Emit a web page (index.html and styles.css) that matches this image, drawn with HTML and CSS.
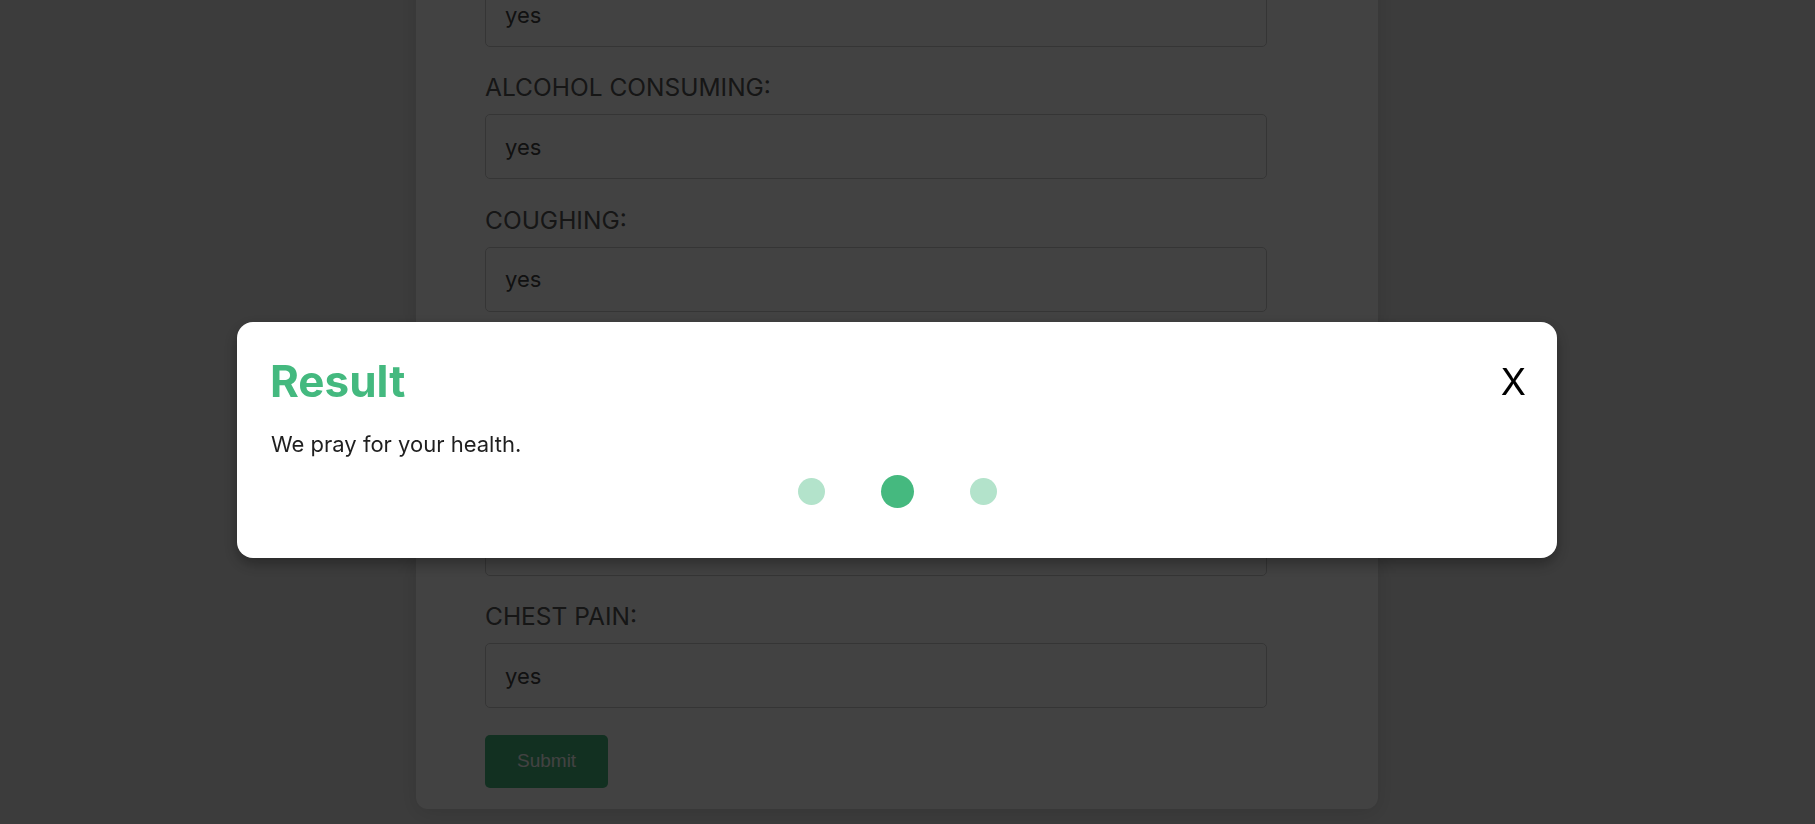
FILE: index.html
```html
<!DOCTYPE html>
<html lang="en">
<head>
<meta charset="utf-8">
<title>Lung Cancer Prediction</title>
<link rel="stylesheet" href="styles.css">
</head>
<body>
<div class="page">
  <form class="card">
    <div class="field">
      <label class="label">WHEEZING:</label>
      <div class="input">yes</div>
    </div>
    <div class="field">
      <label class="label">ALCOHOL CONSUMING:</label>
      <div class="input">yes</div>
    </div>
    <div class="field">
      <label class="label">COUGHING:</label>
      <div class="input">yes</div>
    </div>
    <div class="field">
      <label class="label">SHORTNESS OF BREATH:</label>
      <div class="input">yes</div>
    </div>
    <div class="field">
      <label class="label">SWALLOWING DIFFICULTY:</label>
      <div class="input">yes</div>
    </div>
    <div class="field">
      <label class="label">CHEST PAIN:</label>
      <div class="input">yes</div>
    </div>
    <button type="button" class="submit">Submit</button>
  </form>
</div>

<div class="overlay">
  <div class="modal">
    <div class="modal-head">
      <h2 class="title">Result</h2>
      <span class="close">X</span>
    </div>
    <p class="message">We pray for your health.</p>
    <div class="dots">
      <span class="dot dot-faded"></span>
      <span class="dot dot-active"></span>
      <span class="dot dot-faded"></span>
    </div>
  </div>
</div>
</body>
</html>
```

FILE: styles.css
```css
* { box-sizing: border-box; }

html, body {
  margin: 0;
  padding: 0;
  height: 100%;
  overflow: hidden;
}

body {
  background: #e8e8e8;
  font-family: Inter, "Noto Sans", sans-serif;
}

.page {
  width: calc(100% - 21px);
  margin-top: -100px;
}

.card {
  width: 962px;
  margin: 0 auto;
  background: #ffffff;
  border-radius: 12px;
  box-shadow: 0 4px 20px rgba(0, 0, 0, 0.12);
  padding: 41px 0 21px 69px;
}

.field {
  margin-bottom: 26.3px;
}

.label {
  display: block;
  font-size: 24.5px;
  line-height: 29px;
  font-weight: 400;
  color: #555;
  margin-bottom: 12px;
}

.input {
  width: 782px;
  height: 65px;
  border: 1px solid #ccc;
  border-radius: 5px;
  padding: 0 19px;
  display: flex;
  align-items: center;
  font-size: 22px;
  color: #444;
}

.submit {
  display: block;
  height: 53px;
  padding: 0 32px;
  border: none;
  border-radius: 5px;
  background: #47b87f;
  color: #ffffff;
  font-family: "Liberation Sans", Arial, sans-serif;
  font-size: 19px;
}

.overlay {
  position: fixed;
  inset: 0;
  background: rgba(0, 0, 0, 0.74);
  padding: 322px 21px 0 0;
  display: flex;
  justify-content: center;
  align-items: flex-start;
}

.modal {
  width: 1320px;
  background: #ffffff;
  border-radius: 16px;
  box-shadow: 0 6px 16px rgba(0, 0, 0, 0.35);
  padding: 32px 31px 50px 31px;
}

.modal-head {
  display: flex;
  justify-content: space-between;
  align-items: flex-start;
  padding-left: 2px;
}

.title {
  margin: 0;
  font-size: 44px;
  line-height: 54px;
  font-weight: 700;
  color: #44b97f;
}

.close {
  font-size: 37px;
  line-height: 44px;
  font-weight: 400;
  color: #000;
  margin-top: 6px;
}

.message {
  margin: 23px 0 0;
  padding-left: 3px;
  font-size: 22px;
  line-height: 26px;
  font-weight: 400;
  color: #1f1f1f;
}

.dots {
  height: 34px;
  margin-top: 17px;
  display: flex;
  justify-content: center;
  align-items: center;
  gap: 56px;
}

.dot {
  border-radius: 50%;
  display: block;
}

.dot-faded {
  width: 27px;
  height: 27px;
  background: #b3e3cb;
}

.dot-active {
  width: 33px;
  height: 33px;
  background: #45b97f;
}
```
